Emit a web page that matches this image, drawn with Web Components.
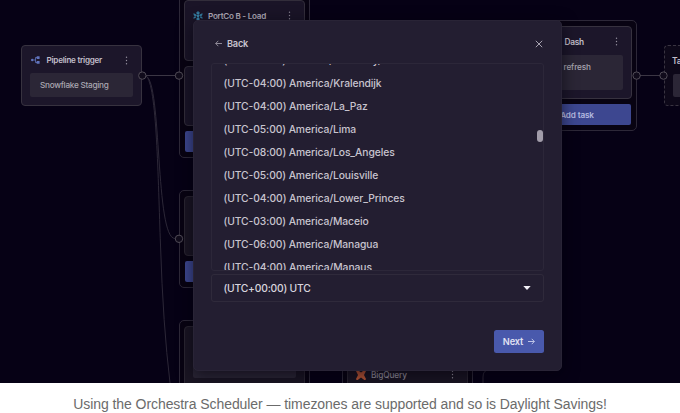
<!DOCTYPE html>
<html lang="en">
<head>
<meta charset="utf-8">
<title>Orchestra Scheduler</title>
<style>
html,body{margin:0;padding:0;background:#fff}
body{font-family:Inter,"Liberation Sans",sans-serif}
</style>
</head>
<body>
<scheduler-figure></scheduler-figure>
<script>
function define(name, html) {
  const t = document.createElement('template');
  t.innerHTML = html;
  customElements.define(name, class extends HTMLElement {
    constructor() {
      super();
      this.attachShadow({mode: 'open'}).appendChild(t.content.cloneNode(true));
    }
  });
}

define('kebab-icon', `
<style>:host{display:block;width:3px;height:9px;color:#96919f}svg{display:block}</style>
<svg width="3" height="9" viewBox="0 0 3 9" fill="currentColor"><circle cx="1.5" cy="1.3" r=".7"/><circle cx="1.5" cy="4.5" r=".7"/><circle cx="1.5" cy="7.7" r=".7"/></svg>`);

define('task-card', `
<style>
:host{display:flex;flex-direction:column;box-sizing:border-box;width:121px;height:61px;padding:7px 8px 8px;gap:6px;background:#1c162a;border:1px solid #37323f;border-radius:4px;color:#c3bfca}
header{display:flex;align-items:center;height:15px;padding:0 5px 0 1px;font-size:8.1px;letter-spacing:-.25px;font-weight:600;white-space:nowrap}
.icon{display:flex;width:15.500px}
.title{flex:1}
.body{flex:1;box-sizing:border-box;background:#2b2636;border-radius:2px;padding:0 10px;font-size:8.2px;letter-spacing:-.26px;line-height:24px;font-weight:500;color:#aaa6b1;white-space:nowrap}
</style>
<header><span class="icon"><slot name="icon"></slot></span><span class="title"><slot name="title"></slot></span><kebab-icon></kebab-icon></header>
<div class="body"><slot></slot></div>`);

define('task-group', `
<style>
:host{display:flex;flex-direction:column;gap:5px;box-sizing:border-box;width:131px;padding:5px 4px;border:1px solid #2d2838;border-radius:5px;background:#080312}
</style><slot></slot>`);

define('add-task', `
<style>
:host{display:flex;align-items:center;justify-content:center;height:21px;margin:0 1px;background:#3d4790;border-radius:2px;font-size:8.2px;letter-spacing:-.15px;font-weight:600;color:#b5bbe0;box-sizing:border-box}
</style><span><slot></slot></span>`);

define('pipeline-canvas', `
<style>
:host{position:absolute;inset:0;overflow:hidden;background:#060115}
task-group,.node{position:absolute}
.edges{position:absolute;left:0;top:0}
.g1{left:179px;top:-6px;height:164px}
.g2{left:179px;top:190px;height:98px}
.g3{left:179px;top:320px;height:98px}
.g4{left:342px;top:302px;height:116px}
.g5{left:506px;top:20px;height:111px}
.trigger{left:21px;top:45px}
.ghost{left:664px;top:45px;border:1px dashed #393441;background:#0d0819}
.quiet{background:#1a1523;border-color:#2a2531}
.dim{opacity:.9}
</style>
<task-group class="g1">
  <task-card class="dim"><svg slot="icon" style="margin-left:-1.500px" width="10" height="10" viewBox="0 0 10 10" stroke="#3b8fb6" stroke-width="1.2" fill="none"><path d="M5 .2v2.800L3.500 1.500M5 3L6.500 1.500M5 9.800V7L3.500 8.500M5 7L6.500 8.500M.5 2.800L3 4.200 1 5M.5 7.200L3 5.800M9.500 2.800L7 4.200 9 5M9.500 7.200L7 5.800"/><circle cx="5" cy="5" r=".7"/></svg><span slot="title" style="margin-left:-1.500px">PortCo B - Load</span></task-card>
  <task-card class="dim"></task-card>
  <add-task></add-task>
</task-group>
<task-group class="g2"><task-card class="quiet"></task-card><add-task></add-task></task-group>
<task-group class="g3"><task-card class="quiet"></task-card></task-group>
<task-group class="g4"><task-card style="visibility:hidden;height:53px"></task-card><task-card class="quiet" style="color:#928d9b"><svg slot="icon" style="margin-left:-1.500px" width="10" height="10" viewBox="0 0 10 10" fill="#b75536"><path d="M0 1Q.5-.5 2 .2L5 2.500 8 .2Q9.500-.5 10 1L8 5l2 4q-.5 1.500-2 .8L5 7.500 2 9.800Q.5 10.500 0 9l2-4z"/></svg><span slot="title" style="font-weight:500;font-size:8.300px;letter-spacing:-.15px;margin-left:-1.500px">BigQuery</span></task-card></task-group>
<task-group class="g5"><task-card style="height:73px"><span slot="icon"></span><span slot="title" style="display:block;padding-left:28px;font-size:8.300px">Dash</span><span style="padding-left:33.500px;letter-spacing:-.1px">refresh</span></task-card><add-task><span style="padding-left:11px">Add task</span></add-task></task-group>
<task-card class="node trigger"><svg slot="icon" width="9" height="8" viewBox="0 0 9 8" fill="#6073bd"><circle cx="1.200" cy="4" r="1.200"/><path d="M1 3.600h3.500v.8H1z"/><rect x="5.600" y=".2" width="3" height="2.800" rx=".5"/><rect x="5.600" y="5" width="3" height="2.800" rx=".5"/><path d="M6 1.500H4.500v5H6" fill="none" stroke="#6073bd" stroke-width=".8"/></svg><span slot="title">Pipeline trigger</span>Snowflake Staging</task-card>
<task-card class="node ghost"><span slot="icon"></span><span slot="title" style="margin-left:-17.500px;font-size:8.500px">Task</span></task-card>
<svg class="edges" width="680" height="383" fill="none" stroke="#3b3644">
  <path d="M142 75.500H179M637 75.500H663"/>
  <path d="M146 76C162 82 155 238.500 175 238.500M146 76C157 84 158 180 160.500 245Q163 325 170 383" stroke="#2c2737"/>
  <path d="M483 383V377Q483 370 489 370" stroke="#2c2737"/>
  <g fill="#100b1b" stroke="#524d58"><circle cx="142.300" cy="75.600" r="3.700"/><circle cx="179" cy="75.600" r="3.700"/><circle cx="179" cy="238.800" r="3.700"/><circle cx="636.600" cy="75.600" r="3.700"/><circle cx="663.500" cy="75.600" r="3.700"/></g>
</svg>`);

define('timezone-list', `
<style>
:host{display:flex;flex-direction:column;justify-content:flex-start;position:relative;box-sizing:border-box;height:208px;overflow:hidden;border:1px solid #2c2739;border-radius:3px}
ul{list-style:none;margin:-15px 0 0;padding:0 0 0 11.500px;font-size:10.3px;letter-spacing:-.08px;line-height:23px;font-weight:500;color:#c8c4cf;white-space:nowrap}
.thumb{position:absolute;right:0;top:66px;width:6px;height:12px;border-radius:3px;background:#a29daa}
.track{position:absolute;right:-1px;top:78px;width:1px;height:104px;background:#3c3747}
</style>
<ul></ul><div class="track"></div><div class="thumb"></div>`);

define('timezone-select', `
<style>
:host{display:flex;align-items:center;justify-content:space-between;box-sizing:border-box;height:28px;padding:0 12px 0 11.500px;border:1px solid #2f2a3b;border-radius:3px;font-size:10.3px;letter-spacing:-.2px;font-weight:500;color:#d8d5de}
</style>
<span><slot></slot></span><svg width="8" height="4" viewBox="0 0 8 4"><path d="M.3 0h7.400L4 4z" fill="#f2f0f6"/></svg>`);

define('schedule-dialog', `
<style>
:host{display:flex;flex-direction:column;box-sizing:border-box;position:absolute;left:193px;top:20px;width:369px;height:351px;padding:14px 17px 17.500px;background:#231e31;border:1px solid #292436;border-radius:5px;box-shadow:0 4px 16px #04000c99;color:#c8c4cf}
header{display:flex;align-items:center;justify-content:space-between;height:17px;padding:0 1px 0 4px;margin-bottom:11px}
.back{display:flex;align-items:center;gap:5px;font-size:9.200px;letter-spacing:-.2px;font-weight:600}
timezone-select{margin-top:3px}
footer{margin-top:auto;display:flex;justify-content:flex-end}
.next{display:flex;align-items:center;justify-content:center;gap:5px;width:50px;height:23px;border-radius:2.500px;background:#4959ac;color:#e0e2f3;font-size:9.200px;letter-spacing:-.1px;font-weight:600}
</style>
<header><span class="back"><svg width="7" height="7" viewBox="0 0 7 7" fill="none" stroke="#a8a3b0" stroke-width=".8"><path d="M7 3.500H.7M3.300.8L.7 3.500l2.600 2.700"/></svg><span>Back</span></span>
<svg width="8" height="8" viewBox="0 0 8 8" fill="none" stroke="#b7b2bf" stroke-width=".9"><path d="M.8.800l6.400 6.400M7.200.800L.8 7.200"/></svg></header>
<timezone-list></timezone-list>
<timezone-select>(UTC+00:00) UTC</timezone-select>
<footer><div class="next"><span>Next</span><svg width="7" height="7" viewBox="0 0 7 7" fill="none" stroke="#ccd0ed" stroke-width=".9"><path d="M0 3.500h6.300M3.700.8l2.600 2.700-2.600 2.700"/></svg></div></footer>`);

define('scheduler-figure', `
<style>
:host{display:flex;flex-direction:column;width:680px;height:413px;overflow:hidden}
.stage{position:relative;height:383px;flex:none;overflow:hidden}
figcaption{display:flex;justify-content:center;padding-top:12px;font-family:"Liberation Sans",Arial,sans-serif;font-size:14px;line-height:18px;letter-spacing:-.07px;color:#6b6b6b;white-space:nowrap}
</style>
<div class="stage"><pipeline-canvas></pipeline-canvas><schedule-dialog></schedule-dialog></div>
<figcaption><span>Using the Orchestra Scheduler — timezones are supported and so is Daylight Savings!</span></figcaption>`);

const zones = [['-05:00','Kentucky/Monticello'],['-04:00','Kralendijk'],['-04:00','La_Paz'],['-05:00','Lima'],['-08:00','Los_Angeles'],['-05:00','Louisville'],['-04:00','Lower_Princes'],['-03:00','Maceio'],['-06:00','Managua'],['-04:00','Manaus']];
const dialog = document.querySelector('scheduler-figure').shadowRoot.querySelector('schedule-dialog');
const list = dialog.shadowRoot.querySelector('timezone-list').shadowRoot.querySelector('ul');
for (const [offset, zone] of zones) {
  const li = document.createElement('li');
  li.textContent = '(UTC' + offset + ') America/' + zone;
  list.appendChild(li);
}
</script>
</body>
</html>
